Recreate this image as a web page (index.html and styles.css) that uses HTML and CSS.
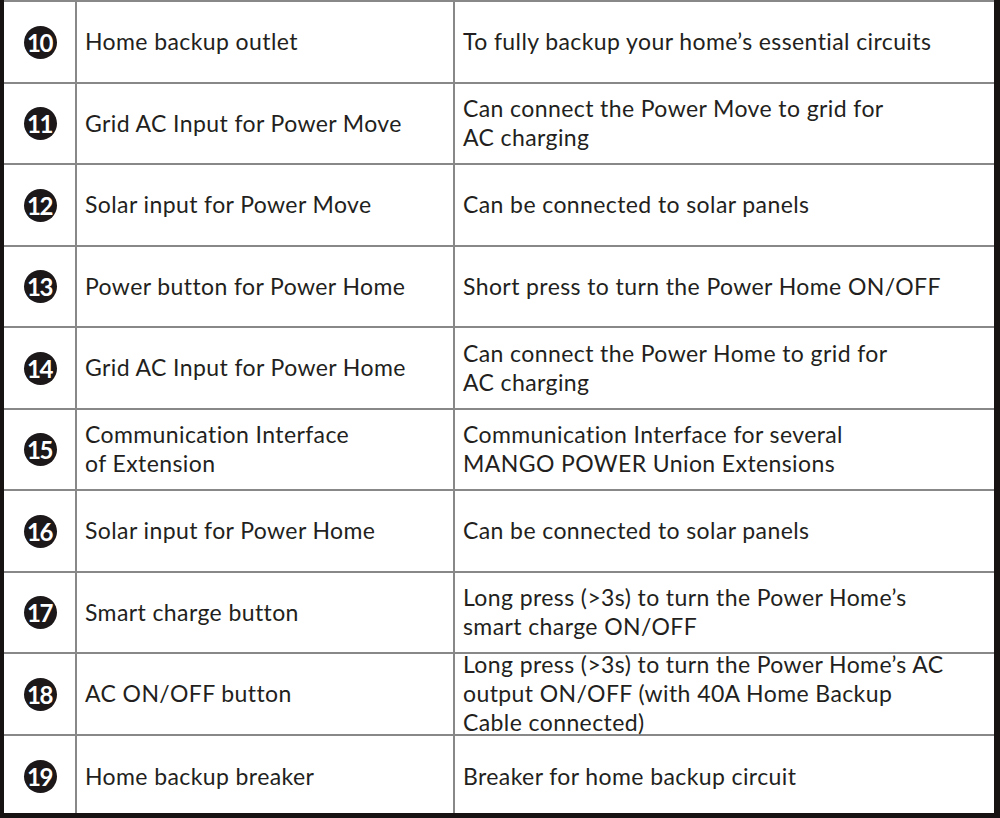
FILE: index.html
```html
<!DOCTYPE html>
<html>
<head>
<meta charset="utf-8">
<link rel="stylesheet" href="styles.css">
</head>
<body>
<div class="table">
  <div class="row"><div class="num"><span class="badge">10</span></div><div class="label">Home backup outlet</div><div class="desc">To fully backup your home’s essential circuits</div></div>
  <div class="row"><div class="num"><span class="badge">11</span></div><div class="label">Grid AC Input for Power Move</div><div class="desc">Can connect the Power Move to grid for<br>AC charging</div></div>
  <div class="row"><div class="num"><span class="badge">12</span></div><div class="label">Solar input for Power Move</div><div class="desc">Can be connected to solar panels</div></div>
  <div class="row"><div class="num"><span class="badge">13</span></div><div class="label">Power button for Power Home</div><div class="desc">Short press to turn the Power Home ON/OFF</div></div>
  <div class="row"><div class="num"><span class="badge">14</span></div><div class="label">Grid AC Input for Power Home</div><div class="desc">Can connect the Power Home to grid for<br>AC charging</div></div>
  <div class="row"><div class="num"><span class="badge">15</span></div><div class="label">Communication Interface<br>of Extension</div><div class="desc">Communication Interface for several<br>MANGO POWER Union Extensions</div></div>
  <div class="row"><div class="num"><span class="badge">16</span></div><div class="label">Solar input for Power Home</div><div class="desc">Can be connected to solar panels</div></div>
  <div class="row"><div class="num"><span class="badge">17</span></div><div class="label">Smart charge button</div><div class="desc">Long press (&gt;3s) to turn the Power Home’s<br>smart charge ON/OFF</div></div>
  <div class="row"><div class="num"><span class="badge">18</span></div><div class="label">AC ON/OFF button</div><div class="desc">Long press (&gt;3s) to turn the Power Home’s AC<br>output ON/OFF (with 40A Home Backup<br>Cable connected)</div></div>
  <div class="row last"><div class="num"><span class="badge">19</span></div><div class="label">Home backup breaker</div><div class="desc">Breaker for home backup circuit</div></div>
</div>
</body>
</html>
```
FILE: styles.css
```css
html, body {
  margin: 0;
  padding: 0;
}
body {
  width: 1000px;
  height: 818px;
  background: #161312;
  overflow: hidden;
  font-family: Lato, "Open Sans", sans-serif;
  color: #231f20;
}
.table {
  margin-left: 4px;
  width: 990px;
  height: 813px;
  background: #fff;
  border-top: 2px solid #888;
  box-sizing: border-box;
  display: flex;
  flex-direction: column;
  overflow: hidden;
}
.row {
  display: grid;
  grid-template-columns: 73px 378px 1fr;
  grid-template-rows: minmax(0, 1fr);
  height: 81.5px;
  flex: none;
  box-sizing: border-box;
  border-bottom: 2px solid #888;
}
.row.last {
  border-bottom: none;
}
.num, .label, .desc {
  display: flex;
  align-items: center;
  box-sizing: border-box;
  min-height: 0;
  font-size: 23px;
  line-height: 29px;
  letter-spacing: 0.4px;
}
.num {
  border-right: 2px solid #888;
  justify-content: center;
}
.label {
  border-right: 2px solid #888;
  padding-left: 8px;
}
.desc {
  padding-left: 8px;
}
.badge {
  width: 33px;
  height: 33px;
  border-radius: 50%;
  background: #1c1718;
  color: #fff;
  font-weight: 700;
  font-size: 24px;
  letter-spacing: -1.5px;
  line-height: 33px;
  text-align: center;
  text-indent: -1px;
  margin-left: 1px;
  margin-top: 1px;
}
```
